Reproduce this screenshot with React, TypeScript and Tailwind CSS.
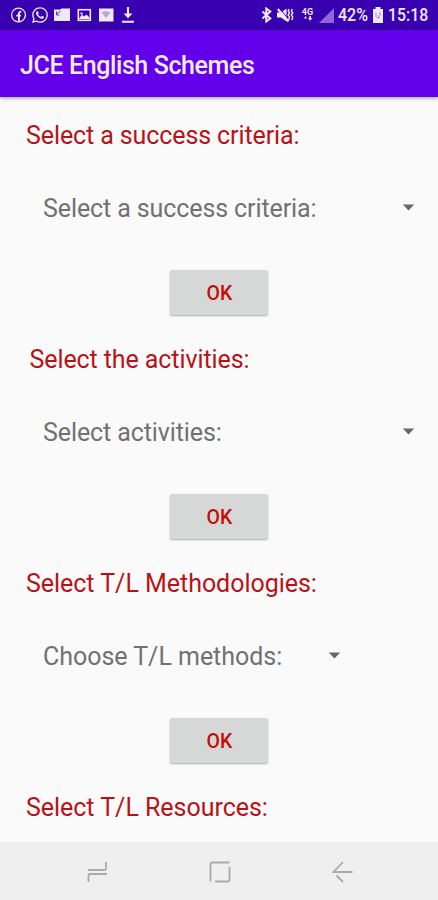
import { FaWhatsapp } from "react-icons/fa";

type Section = { title: string; titleClass: string; option?: string; rowClass?: string };

const sections: Section[] = [
  { title: "Select a success criteria:", titleClass: "pl-[26px] tracking-[-0.1px]", option: "Select a success criteria:", rowClass: "w-[415px] tracking-[-0.1px]" },
  { title: "Select the activities:", titleClass: "pl-[29.5px] tracking-[-0.09px]", option: "Select activities:", rowClass: "w-[415px] tracking-[-0.1px]" },
  { title: "Select T/L Methodologies:", titleClass: "pl-[26px] tracking-[-0.03px]", option: "Choose T/L methods:", rowClass: "w-[340.5px] tracking-[-0.03px]" },
  { title: "Select T/L Resources:", titleClass: "pl-[26px] tracking-[-0.03px]" },
];

function NotificationIcons() {
  return (
    <div className="flex items-center gap-[6px] text-[#eee9ff]">
      <svg width="16" height="16" viewBox="0 0 16 16" fill="none" stroke="currentColor">
        <circle cx="8.5" cy="8" r="6.9" strokeWidth="1.3" />
        <path d="M8.900 14V6.600q0-2 2.400-1.800M6.300 8.600h4.600" strokeWidth="1.900" />
      </svg>
      <FaWhatsapp className="size-[18px] -mx-px" />
      <svg width="16" height="16" viewBox="0 0 16 16" fill="currentColor">
        <path d="M0 2.500h6l1.500-1H16V14H0z" />
        <path d="M2 7.500l4.500-3.500M2.500 4.500V8h3" stroke="#5a35b5" fill="none" />
      </svg>
      <svg width="16" height="16" viewBox="0 0 16 16" fill="none" stroke="currentColor">
        <rect x="2.300" y="2.700" width="12" height="10.600" strokeWidth="1.600" />
        <path d="M3 11.500l3-4 2 2 2.500-2 3 3v1.500H3z" fill="currentColor" stroke="none" />
        <path d="M4.500 5.500h2v2h-2z" fill="currentColor" stroke="none" />
      </svg>
      <svg width="16" height="16" viewBox="0 0 16 16" fill="currentColor">
        <rect x="1" y="1.500" width="14.500" height="13" />
        <path d="M3.500 5.500q4.500-2.600 9 0L8 11z" fill="#b6a9d4" />
      </svg>
      <svg width="16" height="16" viewBox="0 0 16 16" fill="currentColor">
        <path d="M6.900 0h2.200v6.500h3.400L8 11.300 3.500 6.500h3.400zM2 13.700h12v2H2z" />
      </svg>
    </div>
  );
}

function SystemIcons() {
  return (
    <div className="flex items-center text-[#eee9ff]">
      <svg width="12" height="16" viewBox="0 0 12 16" fill="none" stroke="currentColor" strokeWidth="2">
        <path d="M.3 4.500l8 7L4.300 14.500V1.500l4 3L.3 11.500" />
      </svg>
      <svg className="ml-[3px]" width="18" height="16" viewBox="0 0 18 16" fill="currentColor">
        <path d="M0 5.500h4L9.500 1.500v13L4 10.500H0z" />
        <path d="M2.600 1.400L13 13.800" stroke="#3900b1" strokeWidth="1" />
        <path d="M.8 2L11.500 14.500" stroke="currentColor" strokeWidth="2" />
        <path d="M12 2l-.8 2 1.300 2-1.300 2 1.300 2-.8 3M15.200 2l-.8 2 1.300 2-1.300 2 1.300 2-.8 3" fill="none" stroke="currentColor" strokeWidth="1.400" />
      </svg>
      <div className="ml-[6px] mr-px flex h-[16px] w-[13px] flex-col items-center pt-px">
        <span className="text-[9px] font-bold leading-[8px]">4G</span>
        <svg width="10" height="5" viewBox="0 0 10 5" fill="currentColor">
          <path d="M1 2.500L2.500 0 4 2.500zM5 2h1.300V0h1.700v2h1.500L7 4.700z" />
        </svg>
      </div>
      <svg className="ml-[4px]" width="15" height="15" viewBox="0 0 15 15">
        <path d="M15 0v15H0z" fill="#8c65d8" />
      </svg>
      <span className="ml-[4px] w-[31px] origin-left scale-x-[0.89] whitespace-nowrap text-[18px] font-medium leading-none">42%</span>
      <svg className="ml-[3px]" width="12" height="16" viewBox="0 0 12 16" fill="currentColor">
        <path d="M3.500 0h5v2h2.500v14H1V2h2.500z" />
        <path d="M4 5.500v4q1 2 3.500 1.500L6 8.500M8 5v4" fill="none" stroke="#9a87cb" />
      </svg>
      <span className="ml-[4px] w-[41px] origin-left scale-x-[0.88] whitespace-nowrap text-[18px] font-medium leading-none">15:18</span>
    </div>
  );
}

function Spinner({ label, rowClass }: { label: string; rowClass?: string }) {
  return (
    <div className={`mt-[38px] flex h-10 items-center justify-between pl-[43px] text-[#717171] ${rowClass}`}>
      <span className="text-[25px] leading-[30px]">{label}</span>
      <svg className="-mt-[3px]" width="13" height="7" viewBox="0 0 13 7" fill="#666">
        <path d="M.8.500h11.400l-5.700 6z" />
      </svg>
    </div>
  );
}

export default function App() {
  return (
    <div className="flex h-[900px] w-[438px] flex-col overflow-hidden bg-[#fafafa] font-[Roboto,sans-serif]">
      <div className="flex h-[30px] shrink-0 items-center justify-between bg-[#3900b1] pl-[10px] pr-[9px]">
        <NotificationIcons />
        <SystemIcons />
      </div>
      <header className="z-10 flex h-[67px] shrink-0 items-center bg-[#6200ea] pl-5 pt-[5px] shadow-[0_1px_4px_rgba(0,0,0,0.4)]">
        <h1 className="whitespace-nowrap text-[25px] font-medium leading-[30px] tracking-[-0.4px] text-[#f3eaff]">JCE English Schemes</h1>
      </header>
      <main className="flex min-h-0 flex-1 flex-col overflow-hidden pt-[24px]">
        {sections.map((s) => (
          <section key={s.title} className="shrink-0 pb-[30px]">
            <h2 className={`whitespace-nowrap text-[25px] leading-[30px] text-[#b91216] ${s.titleClass}`}>{s.title}</h2>
            {s.option && (
              <>
                <Spinner label={s.option} rowClass={s.rowClass} />
                <button className="ml-[170px] mt-[41px] flex h-[45px] w-[98px] items-center justify-center rounded-[2px] bg-[#d6d8d7] pl-px pt-[3px] text-[19.500px] font-medium leading-[24px] text-[#c40c0c] shadow-[0_1px_2px_rgba(0,0,0,0.3)]">
                  OK
                </button>
              </>
            )}
          </section>
        ))}
      </main>
      <nav className="flex h-[58px] shrink-0 items-center justify-between bg-[#efefef] pl-[86px] pr-[85px] pt-px">
        <svg width="22" height="24" viewBox="0 0 22 24" fill="none" stroke="#aaa" strokeWidth="1.800">
          <path d="M2 10h16.500q1.500 0 1.500-1.500V2M2.500 22v-6.500q0-1.500 1.500-1.500h17" />
        </svg>
        <svg width="22" height="22" viewBox="0 0 22 22" fill="none" stroke="#aaa" strokeWidth="1.800">
          <path d="M1.500 20.500V3.500q0-2 2-2H20.500M20.500 6v12.500q0 2-2 2H6" />
        </svg>
        <svg width="21" height="22" viewBox="0 0 21 22" fill="none" stroke="#aaa" strokeWidth="1.800">
          <path d="M11 1L1.500 11H20.500M4.500 14.500L11 21" />
        </svg>
      </nav>
    </div>
  );
}
